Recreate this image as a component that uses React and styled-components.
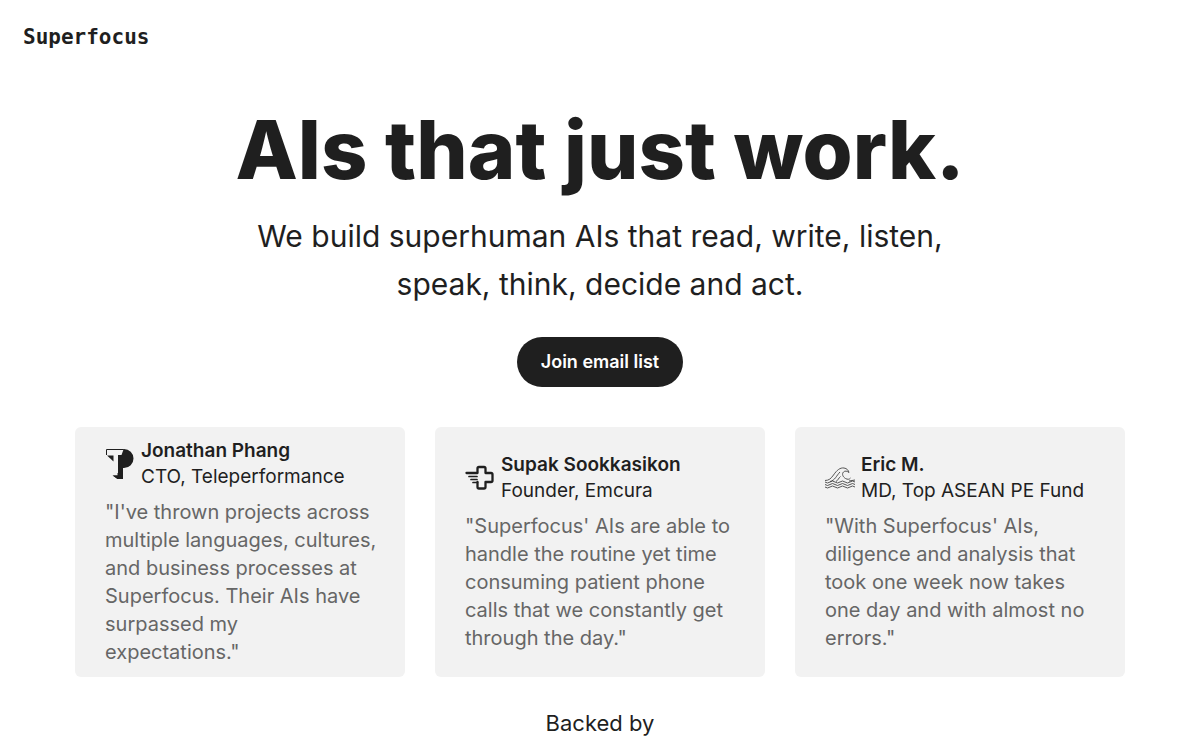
import React from "react";
import styled, { createGlobalStyle } from "styled-components";

const ink = "#1f1f1f";
const panel = "#f2f2f2";

const GlobalStyle = createGlobalStyle`
  *, *::before, *::after { box-sizing: border-box; }
  body {
    margin: 0;
    background: #fff;
    color: ${ink};
    font-family: Inter, "Liberation Sans", sans-serif;
  }
`;

const Header = styled.header`
  padding: 24px 23px 0;
`;

const Wordmark = styled.a`
  display: inline-block;
  color: ${ink};
  font: 700 21px/26px "DejaVu Sans Mono", "Liberation Mono", monospace;
  text-decoration: none;
`;

const Main = styled.main`
  display: flex;
  flex-direction: column;
  align-items: center;
  padding: 48px 24px 0;
`;

const Title = styled.h1`
  margin: 0;
  font-size: 81px;
  font-weight: 800;
  line-height: 104px;
  text-align: center;
`;

const Subtitle = styled.p`
  max-width: 720px;
  margin: 10px 0 0;
  font-size: 30px;
  line-height: 48px;
  text-align: center;
`;

const JoinButton = styled.button`
  margin-top: 29px;
  padding: 0 24px;
  height: 50px;
  border: 0;
  border-radius: 25px;
  background: ${ink};
  color: #fff;
  font: 600 18px/26px Inter, "Liberation Sans", sans-serif;
  cursor: pointer;
`;

const Cards = styled.section`
  display: grid;
  grid-template-columns: repeat(3, minmax(0, 1fr));
  gap: 30px;
  width: 100%;
  max-width: 1050px;
  margin-top: 40px;
`;

const Card = styled.figure`
  display: flex;
  flex-direction: column;
  justify-content: center;
  gap: 8px;
  min-height: 250px;
  margin: 0;
  padding: 10px 20px 10px 30px;
  border-radius: 6px;
  background: ${panel};
`;

const Person = styled.figcaption`
  display: flex;
  align-items: center;
  gap: 6px;
  font-size: 19px;
  line-height: 26px;
`;

const Name = styled.strong`
  display: block;
  font-weight: 600;
`;

const Quote = styled.blockquote`
  margin: 0;
  color: #666;
  font-size: 20px;
  line-height: 28px;
  white-space: pre-line;
`;

const Icon = styled.svg`
  flex: none;
  width: 30px;
  height: 32px;
`;

const Backed = styled.h2`
  margin: 30px 0 0;
  font-size: 22px;
  font-weight: 400;
  line-height: 32px;
`;

const MonogramIcon = () => (
  <Icon viewBox="0 0 30 32" aria-hidden="true">
    <path d="M17 1h2a9.500 9.500 0 0 1 0 19h-1v11h-5.500L8 27.500h4.500V7z" fill={ink} />
    <path d="M1.500 1.500h17L16.500 7H13v18H8.500V7h-7z" fill={panel} />
    <path d="M2 7.500h6.500v6z" fill={ink} />
    <path d="M13 26v1.500H7.500l5 3.500H18V20h-5z" fill={ink} />
    <path d="M18.500 1.500h-17V7" fill="none" stroke={ink} />
  </Icon>
);

const CrossIcon = () => (
  <Icon viewBox="0 0 30 32" fill="none" stroke={ink} strokeWidth="2.300" strokeLinecap="round" strokeLinejoin="round" aria-hidden="true">
    <path d="M1.500 11h11V6.500Q12.500 5 14 5h5q1.500 0 1.500 1.500V11H26q1.500 0 1.500 1.500v6Q27.500 20 26 20h-5.500v5q0 1.500-1.500 1.500h-5q-1.500 0-1.500-1.500v-5" />
    <path strokeWidth="1.700" d="M4 14.500h8M6 17.500h6M8 20.500h4.500" />
  </Icon>
);

const WaveIcon = () => (
  <Icon viewBox="0 0 30 32" fill="none" stroke="#444" strokeWidth=".9" aria-hidden="true">
    <path d="M0 18.500c4 0 6-2 8.500-5.500C12 8 15 5.500 19 6c3 .4 4.500 2.500 5 4.500-2-1.500-4-2-5.500-.5-2 2-.5 5 2 6.500 2 1.200 4 1 5-.5M5 19.500c5-1 6.500-6 10-9.500M11 19.500c2-1 2.500-3.500 4.500-5M24 19l6-1" />
    <path d="M0 20q2.500 2 5 0t5 0 5 0 5 0 5 0 5 0M0 22.500q2.500 2 5 0t5 0 5 0 5 0 5 0 5 0M0 25q2.500 2 5 0t5 0 5 0 5 0 5 0 5 0" />
  </Icon>
);

const testimonials = [
  {
    name: "Jonathan Phang",
    role: "CTO, Teleperformance",
    icon: MonogramIcon,
    quote: "\"I've thrown projects across\nmultiple languages, cultures,\nand business processes at\nSuperfocus. Their AIs have\nsurpassed my\nexpectations.\"",
  },
  {
    name: "Supak Sookkasikon",
    role: "Founder, Emcura",
    icon: CrossIcon,
    quote: "\"Superfocus' AIs are able to\nhandle the routine yet time\nconsuming patient phone\ncalls that we constantly get\nthrough the day.\"",
  },
  {
    name: "Eric M.",
    role: "MD, Top ASEAN PE Fund",
    icon: WaveIcon,
    quote: "\"With Superfocus' AIs,\ndiligence and analysis that\ntook one week now takes\none day and with almost no\nerrors.\"",
  },
];

export default function App() {
  return (
    <>
      <GlobalStyle />
      <Header>
        <Wordmark href="#">Superfocus</Wordmark>
      </Header>
      <Main>
        <Title>AIs that just work.</Title>
        <Subtitle>We build superhuman AIs that read, write, listen, speak, think, decide and act.</Subtitle>
        <JoinButton type="button">Join email list</JoinButton>
        <Cards>
          {testimonials.map(({ name, role, icon: Mark, quote }) => (
            <Card key={name}>
              <Person>
                <Mark />
                <div>
                  <Name>{name}</Name>
                  {role}
                </div>
              </Person>
              <Quote>{quote}</Quote>
            </Card>
          ))}
        </Cards>
        <Backed>Backed by</Backed>
      </Main>
    </>
  );
}
